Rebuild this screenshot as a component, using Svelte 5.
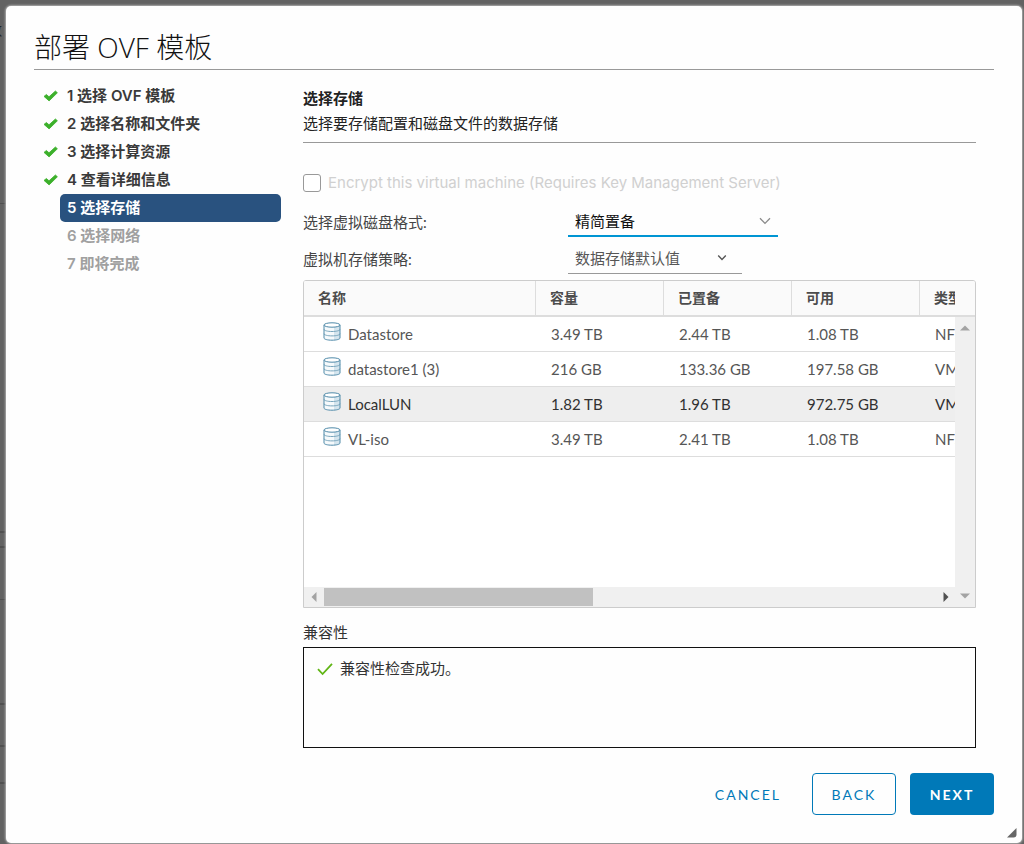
<script>
  const steps = [
    { n: 1, label: '选择 OVF 模板', state: 'done' },
    { n: 2, label: '选择名称和文件夹', state: 'done' },
    { n: 3, label: '选择计算资源', state: 'done' },
    { n: 4, label: '查看详细信息', state: 'done' },
    { n: 5, label: '选择存储', state: 'current' },
    { n: 6, label: '选择网络', state: 'todo' },
    { n: 7, label: '即将完成', state: 'todo' }
  ];
  const columns = ['名称', '容量', '已置备', '可用', '类型'];
  const rows = [
    ['Datastore', '3.49 TB', '2.44 TB', '1.08 TB', 'NFS'],
    ['datastore1 (3)', '216 GB', '133.36 GB', '197.58 GB', 'VMFS'],
    ['LocalLUN', '1.82 TB', '1.96 TB', '972.75 GB', 'VMFS'],
    ['VL-iso', '3.49 TB', '2.41 TB', '1.08 TB', 'NFS']
  ];
  let selected = $state('LocalLUN');
</script>

<div class="page">
  <span class="behind" aria-hidden="true">数</span>
  <main class="dialog">
    <h1>部署 OVF 模板</h1>
    <div class="body">
      <nav aria-label="步骤">
        <ol>
          {#each steps as s}
            <li class={s.state}>
              <span class="mark">
                {#if s.state === 'done'}
                  <svg width="16" height="12" viewBox="0 0 16 12"><path d="M1 6.400 3.400 4.500 6 6.800 12.400 1 14.400 2.800 6.100 10.900Z" fill="#3cb02b" stroke="#3cb02b" stroke-width=".8" stroke-linejoin="round" /></svg>
                {/if}
              </span>
              <span class="step">{s.n} {s.label}</span>
            </li>
          {/each}
        </ol>
      </nav>

      <section class="content">
        <header>
          <h2>选择存储</h2>
          <p>选择要存储配置和磁盘文件的数据存储</p>
        </header>

        <label class="encrypt"><input type="checkbox" disabled /><span>Encrypt this virtual machine (Requires Key Management Server)</span></label>

        <div class="field">
          <label for="format">选择虚拟磁盘格式:</label>
          <div class="select active">
            <select id="format"><option>精简置备</option></select>
            <svg width="12" height="8" viewBox="0 0 12 8"><path d="M1 1.2 6 6.4 11 1.2" fill="none" stroke="#8a8a8a" stroke-width="1.3" /></svg>
          </div>
        </div>
        <div class="field">
          <label for="policy">虚拟机存储策略:</label>
          <div class="select">
            <select id="policy"><option>数据存储默认值</option></select>
            <svg width="10" height="8" viewBox="0 0 10 8"><path d="M1.2 1.6 5 5.6 8.8 1.6" fill="none" stroke="#565656" stroke-width="1.4" /></svg>
          </div>
        </div>

        <div class="grid">
          <div class="view">
            <table>
              <colgroup><col class="c-name" /><col /><col /><col /><col class="c-type" /></colgroup>
              <thead>
                <tr>{#each columns as c}<th scope="col">{c}</th>{/each}</tr>
              </thead>
              <tbody>
                {#each rows as r}
                  <tr class:selected={selected === r[0]} onclick={() => (selected = r[0])}>
                    <td>
                      <div class="name">
                        <svg width="18" height="19" viewBox="0 0 18 19">
                          <path d="M1 3v13c0 1.3 3.5 2.2 8 2.2s8-.9 8-2.2V3Z" fill="#f6fafc" />
                          <path d="M11 5v13c3.5-.3 6-1 6-2V3.200C16 4.300 14 4.800 11 5Z" fill="#d5e5ee" />
                          <path d="M1 7.300c0 1.300 3.500 2.200 8 2.200s8-.9 8-2.200M1 11.700c0 1.300 3.500 2.200 8 2.200s8-.9 8-2.200" fill="none" stroke="#79a6bd" />
                          <path d="M1 3v13c0 1.300 3.500 2.200 8 2.200s8-.9 8-2.200V3" fill="none" stroke="#4f89a8" />
                          <ellipse cx="9" cy="3" rx="8" ry="2.200" fill="#fff" stroke="#4f89a8" />
                        </svg>
                        <span>{r[0]}</span>
                      </div>
                    </td>
                    {#each r.slice(1) as v}<td>{v}</td>{/each}
                  </tr>
                {/each}
              </tbody>
            </table>
          </div>
          <div class="corner"></div>
          <div class="vbar">
            <svg width="10" height="6" viewBox="0 0 10 6"><path d="M0 5.500 5 .5 10 5.500Z" fill="#a3a3a3" /></svg>
            <svg width="10" height="6" viewBox="0 0 10 6"><path d="M0 .5 5 5.500 10 .5Z" fill="#a3a3a3" /></svg>
          </div>
          <div class="hbar">
            <svg width="6" height="10" viewBox="0 0 6 10"><path d="M5.500 0 .5 5 5.500 10Z" fill="#a3a3a3" /></svg>
            <div class="track"><div class="thumb"></div></div>
            <svg width="6" height="10" viewBox="0 0 6 10"><path d="M.5 0 5.500 5 .5 10Z" fill="#505050" /></svg>
          </div>
        </div>

        <h3>兼容性</h3>
        <div class="compat">
          <svg width="16" height="14" viewBox="0 0 16 14"><path d="M1 7.200 5.600 12 15 1.800" fill="none" stroke="#60b515" stroke-width="1.800" /></svg>
          <span>兼容性检查成功。</span>
        </div>
      </section>
    </div>

    <footer>
      <button class="link">CANCEL</button>
      <button class="outline">BACK</button>
      <button class="primary">NEXT</button>
    </footer>
    <svg class="resize" width="10" height="10" viewBox="0 0 10 10"><path d="M9.500 0V6.500Q9.500 9.500 6.500 9.500H0Z" fill="#666" /></svg>
  </main>
</div>

<style>
  :global(body) { background: #626262; }
  .page, .page * { box-sizing: border-box; }
  .page {
    position: relative;
    display: flex;
    min-height: 100vh;
    padding: 6px 2px 1px 6px;
    overflow: hidden;
    font: 15px/24px Lato, "Noto Sans CJK SC", sans-serif;
    color: #333;
    background:
      linear-gradient(#505050, #505050) 0 203px / 6px 1px no-repeat,
      linear-gradient(#505050, #505050) 0 531px / 6px 2px no-repeat,
      linear-gradient(#505050, #505050) 0 546px / 6px 2px no-repeat,
      linear-gradient(#505050, #505050) 0 599px / 6px 1px no-repeat,
      linear-gradient(#505050, #505050) 0 703px / 6px 2px no-repeat,
      linear-gradient(#505050, #505050) 0 745px / 6px 2px no-repeat,
      linear-gradient(#505050, #505050) 0 782px / 6px 2px no-repeat,
      #626262;
  }
  .behind { position: absolute; left: -12px; top: 18px; font-size: 14px; color: #222; }
  .dialog {
    position: relative;
    flex: 1;
    display: flex;
    flex-direction: column;
    padding: 23px 28px 28px;
    background: #fefefe;
    border-radius: 5px;
    box-shadow: 0 0 2px 1px #aaa;
  }
  h1 {
    margin: 0;
    height: 41px;
    border-bottom: 1px solid #999;
    font-size: 28px;
    line-height: 36px;
    font-weight: 200;
    font-family: "Open Sans", "Noto Sans CJK SC", sans-serif;
    color: #111;
  }
  .body { display: flex; gap: 22px; padding: 12px 18px 0 0; }
  nav { flex: 0 0 247px; }
  ol { margin: 0; padding: 0; list-style: none; }
  li { display: flex; height: 28px; font-weight: 600; font-family: Inter, "Noto Sans CJK SC", sans-serif; color: #3a3a3a; }
  .mark { flex: 0 0 26px; padding-left: 9px; display: flex; align-items: center; }
  .step { flex: 1; padding: 0 7px; line-height: 27px; border-radius: 5px; }
  .current .step { background: #29527f; color: #fff; }
  .todo { color: #a0a0a0; }

  .content { flex: 1; min-width: 0; padding-top: 4px; }
  header { border-bottom: 1px solid #999; padding-bottom: 6px; }
  h2 { margin: 0; font-size: 15px; line-height: 25px; color: #222; }
  header p { margin: 0; line-height: 25px; color: #222; }
  .encrypt { display: flex; align-items: center; gap: 7px; height: 24px; margin: 28px 0 8px; color: #d0d0d0; font-family: Inter, sans-serif; }
  .encrypt input { appearance: none; margin: 0; width: 18px; height: 18px; border: 1px solid #999; border-radius: 3px; background: #fff; }
  .field { display: flex; height: 37px; align-items: center; color: #454545; }
  .field label { flex: 0 0 265px; }
  .select { display: grid; width: 174px; align-items: center; border-bottom: 1px solid #999; color: #565656; }
  .select.active { width: 210px; border-bottom: 2px solid #0095d3; color: #111; }
  .select select {
    grid-area: 1 / 1;
    appearance: none;
    height: 29px;
    padding: 0 28px 0 7px;
    border: 0;
    background: none;
    outline: none;
    font: inherit;
    color: inherit;
  }
  .select svg { grid-area: 1 / 1; justify-self: end; margin-right: 15px; pointer-events: none; }
  .active svg { margin-right: 7px; }

  .grid {
    display: grid;
    grid-template-columns: 1fr 20px;
    grid-template-rows: 36px 270px 20px;
    margin-top: 3px;
    border: 1px solid #ccc;
    border-radius: 3px 3px 0 0;
    overflow: hidden;
  }
  .view { grid-area: 1 / 1 / 3 / 2; overflow: hidden; background: #fff; }
  table { table-layout: fixed; width: 1000px; border-collapse: separate; border-spacing: 0; color: #565656; }
  col { width: 128px; }
  .c-name { width: 232px; }
  .c-type { width: auto; }
  th {
    height: 36px;
    padding: 0 14px;
    text-align: left;
    font-size: 14px;
    line-height: 20px;
    background: #fafafa;
    border-right: 1px solid #ddd;
    border-bottom: 2px solid #ddd;
    color: #4c4c4c;
  }
  td { height: 35px; padding: 0 15px; border-bottom: 1px solid #ddd; line-height: 20px; white-space: nowrap; }
  .name { display: flex; align-items: flex-start; gap: 7px; height: 24px; padding-left: 4px; }
  .name span { padding-top: 2px; }
  .selected td { background: #eee; color: #313131; }
  .corner { background: #fafafa; border-bottom: 2px solid #ddd; }
  .vbar {
    grid-area: 2 / 2 / 4 / 3;
    display: flex;
    flex-direction: column;
    justify-content: space-between;
    align-items: center;
    padding: 8px 0;
    background: #f0f0f0;
  }
  .hbar { display: flex; align-items: center; gap: 7px; padding: 0 6px 0 7px; background: #f0f0f0; grid-area: 3 / 1; }
  .track { flex: 1; }
  .thumb { width: 44%; height: 18px; background: #c1c1c1; }

  h3 { margin: 12px 0 3px; font-size: 15px; line-height: 24px; font-weight: 400; }
  .compat { display: flex; align-items: flex-start; gap: 7px; min-height: 101px; padding: 8px 13px; border: 1px solid #111; }
  .compat svg { margin-top: 6px; }

  footer { display: flex; justify-content: flex-end; gap: 14px; margin-top: auto; }
  button {
    height: 42px;
    min-width: 84px;
    padding: 2px 16px 0;
    border: 1px solid transparent;
    border-radius: 4px;
    background: none;
    font: 14px/20px Lato, sans-serif;
    letter-spacing: 2px;
    color: #0079b8;
  }
  .outline { border-color: #0079b8; }
  .primary { background: #0079b8; color: #fff; font-weight: 700; }
  .resize { position: absolute; right: 5px; bottom: 5px; }
</style>
